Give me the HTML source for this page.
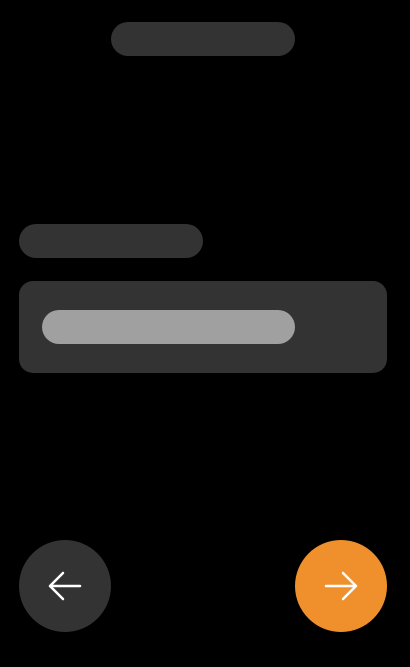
<!DOCTYPE html>
<html><head><style>
body{margin:0;width:410px;height:667px;background:#000;position:relative;overflow:hidden}
div{position:absolute}
.p{background:#333;border-radius:17px;height:34px}
</style></head><body>
<div class="p" style="left:111px;top:22px;width:184px"></div>
<div class="p" style="left:19px;top:224px;width:184px"></div>
<div style="left:19px;top:281px;width:368px;height:92px;background:#333;border-radius:14px"></div>
<div style="left:42px;top:310px;width:253px;height:34px;background:#a0a0a0;border-radius:17px"></div>
<div style="left:19px;top:540px;width:92px;height:92px;border-radius:50%;background:#333"></div>
<div style="left:295px;top:540px;width:92px;height:92px;border-radius:50%;background:#f0902d"></div>
<svg width="410" height="667" style="position:absolute;left:0;top:0">
<g stroke="#fff" stroke-width="2.5" fill="none" stroke-linecap="round" stroke-linejoin="round">
<path d="M80 586H50M63 573L50 586L63 599"/>
<path d="M326 586H356M343 573L356 586L343 599"/>
</g></svg>
</body></html>
